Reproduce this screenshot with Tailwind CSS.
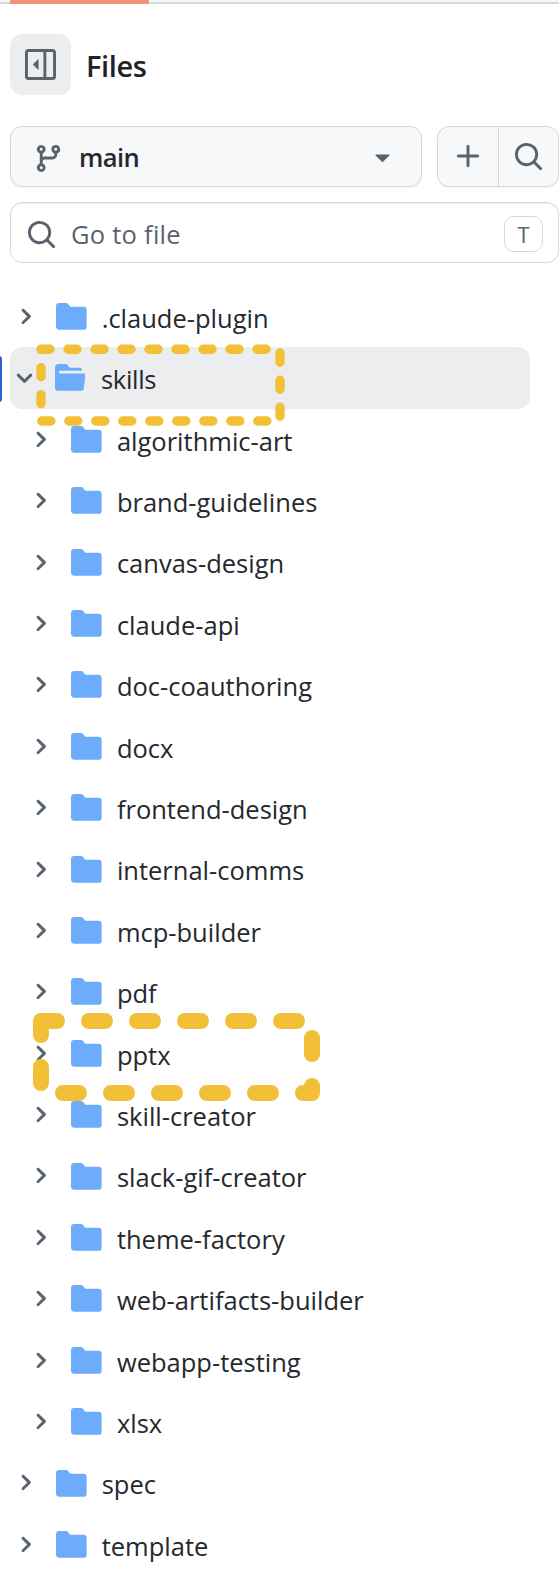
<!DOCTYPE html>
<html lang="en">
  <head>
    <meta charset="utf-8" />
    <meta name="viewport" content="width=device-width, initial-scale=1" />
    <title>Files</title>
    <script src="https://cdn.jsdelivr.net/npm/@tailwindcss/browser@4"></script>
  </head>
  <body class="bg-white">
    <svg class="hidden">
      <symbol id="chevron-right" viewBox="0 0 12 12"><path d="M4.7 10c-.2 0-.4-.1-.5-.2-.3-.3-.3-.8 0-1.1L6.9 6 4.2 3.3c-.3-.3-.3-.8 0-1.1.3-.3.8-.3 1.1 0l3.3 3.2c.3.3.3.8 0 1.1L5.3 9.7c-.2.2-.4.3-.6.3Z"/></symbol>
      <symbol id="chevron-down" viewBox="0 0 12 12"><path d="M6 8.825c-.2 0-.4-.1-.5-.2l-3.3-3.3c-.3-.3-.3-.8 0-1.1.3-.3.8-.3 1.1 0l2.7 2.7 2.7-2.7c.3-.3.8-.3 1.1 0 .3.3.3.8 0 1.1l-3.2 3.2c-.2.2-.4.3-.6.3Z"/></symbol>
      <symbol id="folder" viewBox="0 0 16 16"><path d="M1.75 1A1.75 1.75 0 0 0 0 2.75v10.5C0 14.216.784 15 1.75 15h12.5A1.75 1.75 0 0 0 16 13.25v-8.5A1.75 1.75 0 0 0 14.25 3H7.5a.25.25 0 0 1-.2-.1l-.9-1.2C6.07 1.26 5.55 1 5 1H1.75Z"/></symbol>
      <symbol id="folder-open" viewBox="0 0 16 16"><path d="M.513 1.513A1.75 1.75 0 0 1 1.75 1h3.5c.55 0 1.07.26 1.4.7l.9 1.2a.25.25 0 0 0 .2.1H13a1 1 0 0 1 1 1v.5H2.75a.75.75 0 0 0 0 1.5h11.978a1 1 0 0 1 .994 1.117L15 13.25A1.75 1.75 0 0 1 13.25 15H1.75A1.75 1.75 0 0 1 0 13.25V2.75c0-.464.184-.91.513-1.237Z"/></symbol>
      <symbol id="search" viewBox="0 0 16 16"><path d="M10.68 11.74a6 6 0 0 1-7.922-8.982 6 6 0 0 1 8.982 7.922l3.04 3.04a.749.749 0 0 1-.326 1.275.749.749 0 0 1-.734-.215ZM11.5 7a4.499 4.499 0 1 0-8.997 0A4.499 4.499 0 0 0 11.5 7Z"/></symbol>
    </svg>

    <div id="app" class="relative flex h-[1580px] w-[559px] flex-col overflow-hidden font-['Open_Sans','Noto_Sans',sans-serif] text-[25.5px] text-[#25292e]">
      <!-- bottom edge of the repo tabs -->
      <div class="h-1 shrink-0 border-b-2 border-[#d1d9e0] bg-[#f6f8fa] pl-2.5">
        <div class="h-1 w-[139px] bg-[#f0917b]"></div>
      </div>

      <div class="mt-[30px] flex items-center pl-2.5">
        <button class="flex size-[61px] items-center justify-center rounded-xl bg-[#ebedef] text-[#59636e]">
          <svg class="size-[31px]" viewBox="0 0 16 16" fill="currentColor"><path d="m4.177 7.823 2.396-2.396A.25.25 0 0 1 7 5.604v4.792a.25.25 0 0 1-.427.177L4.177 8.177a.25.25 0 0 1 0-.354Z"/><path d="M0 1.75C0 .784.784 0 1.75 0h12.5C15.216 0 16 .784 16 1.75v12.5A1.75 1.75 0 0 1 14.25 16H1.75A1.75 1.75 0 0 1 0 14.25Zm1.75-.25a.25.25 0 0 0-.25.25v12.5c0 .138.112.25.25.25H9.5v-13Zm12.5 13a.25.25 0 0 0 .25-.25V1.75a.25.25 0 0 0-.25-.25H11v13Z"/></svg>
        </button>
        <h2 class="ml-[15px] pt-[3px] text-[29px] font-semibold tracking-[-0.4px] text-[#1f2328]">Files</h2>
      </div>

      <div class="mt-[31px] flex h-[61px] shrink-0 pl-2.5 text-[#59636e]">
        <button class="flex w-[412px] items-center rounded-xl border border-[#d1d9e0] bg-[#f6f8fa] pr-[23px] pl-[22px] shadow-xs">
          <svg class="mt-[3px] size-[31px]" viewBox="0 0 16 16" fill="currentColor"><path d="M9.5 3.25a2.25 2.25 0 1 1 3 2.122V6A2.5 2.5 0 0 1 10 8.5H6a1 1 0 0 0-1 1v1.128a2.251 2.251 0 1 1-1.5 0V5.372a2.25 2.25 0 1 1 1.5 0v1.836A2.493 2.493 0 0 1 6 7h4a1 1 0 0 0 1-1v-.628A2.25 2.25 0 0 1 9.5 3.25Zm-6 0a.75.75 0 1 0 1.5 0 .75.75 0 0 0-1.5 0Zm8.25-.75a.75.75 0 1 0 0 1.5.75.75 0 0 0 0-1.5ZM4.25 12a.75.75 0 1 0 0 1.5.75.75 0 0 0 0-1.5Z"/></svg>
          <span class="ml-[15px] pt-[2px] font-semibold tracking-[-0.6px] text-[#25292e]">main</span>
          <svg class="ml-auto size-[31px]" viewBox="0 0 16 16" fill="currentColor"><path d="m4.427 7.427 3.396 3.396a.25.25 0 0 0 .354 0l3.396-3.396A.25.25 0 0 0 11.396 7H4.604a.25.25 0 0 0-.177.427Z"/></svg>
        </button>
        <div class="ml-[15px] flex w-[122px] rounded-xl border border-[#d1d9e0] bg-[#f6f8fa] shadow-xs">
          <button class="flex w-[61px] items-center justify-center border-r border-[#d1d9e0]">
            <svg class="size-[31px]" viewBox="0 0 16 16" fill="currentColor"><path d="M7.75 2a.75.75 0 0 1 .75.75V7h4.25a.75.75 0 0 1 0 1.5H8.5v4.25a.75.75 0 0 1-1.5 0V8.5H2.75a.75.75 0 0 1 0-1.5H7V2.75A.75.75 0 0 1 7.75 2Z"/></svg>
          </button>
          <button class="flex flex-1 items-center justify-center">
            <svg class="size-[31px]" fill="currentColor"><use href="#search"/></svg>
          </button>
        </div>
      </div>

      <div class="mt-[15px] ml-2.5 flex h-[61px] shrink-0 items-center rounded-xl border border-[#d1d9e0] pr-[15px] pl-[15px] text-[#59636e] inset-shadow-2xs">
        <svg class="mt-[4px] size-[31px]" fill="currentColor"><use href="#search"/></svg>
        <span class="ml-[14px] pt-[3px] tracking-[0.25px]">Go to file</span>
        <kbd class="mt-[2px] ml-auto flex h-9 w-[39px] items-center justify-center rounded-[10px] border border-[#d1d9e0] pt-[2px] font-['Open_Sans','Noto_Sans',sans-serif] text-[22px]">T</kbd>
      </div>

      <ul id="tree" class="mt-[22.8px]"></ul>

      <!-- highlight marks -->
      <svg class="pointer-events-none absolute inset-0 h-[1580px] w-[559px]" fill="none" stroke="#f2bf37" stroke-linecap="round" stroke-linejoin="round">
        <path d="M41 349.2H280V421H41Z" stroke-width="9.4" stroke-dasharray="9 18"/>
        <path d="M41 1021H312V1093H41Z" stroke-width="16" stroke-dasharray="16 32"/>
      </svg>
    </div>

    <script>
      const children = [
        'algorithmic-art', 'brand-guidelines', 'canvas-design', 'claude-api',
        'doc-coauthoring', 'docx', 'frontend-design', 'internal-comms',
        'mcp-builder', 'pdf', 'pptx', 'skill-creator', 'slack-gif-creator',
        'theme-factory', 'web-artifacts-builder', 'webapp-testing', 'xlsx',
      ]

      const row = (name, nested) => `
        <li class="flex h-[61.4px] items-center ${nested ? 'pl-[28.8px]' : 'pl-[13.6px]'}">
          <svg class="size-[23px]" fill="#59636e"><use href="#chevron-right"/></svg>
          <svg class="ml-[19.3px] size-[30.8px]" fill="#6cacfa"><use href="#folder"/></svg>
          <span class="ml-[15px] pt-[3px]">${name}</span>
        </li>`

      const openRow = `
        <li class="relative ml-2.5 flex h-[61.4px] w-[520px] items-center rounded-xl bg-[#ebedef] pl-[3px]">
          <span class="absolute top-[8.5px] -left-[14px] h-[46px] w-1.5 rounded-md bg-[#2d5fd3]"></span>
          <svg class="size-[23px]" fill="#59636e"><use href="#chevron-down"/></svg>
          <svg class="ml-[19.2px] size-[30.8px]" fill="#6cacfa"><use href="#folder-open"/></svg>
          <span class="ml-[15px] pt-[3px] tracking-[-0.3px]">skills</span>
        </li>`

      document.getElementById('tree').innerHTML =
        row('.claude-plugin') + openRow +
        children.map(name => row(name, true)).join('') +
        row('spec') + row('template')
    </script>
  </body>
</html>
